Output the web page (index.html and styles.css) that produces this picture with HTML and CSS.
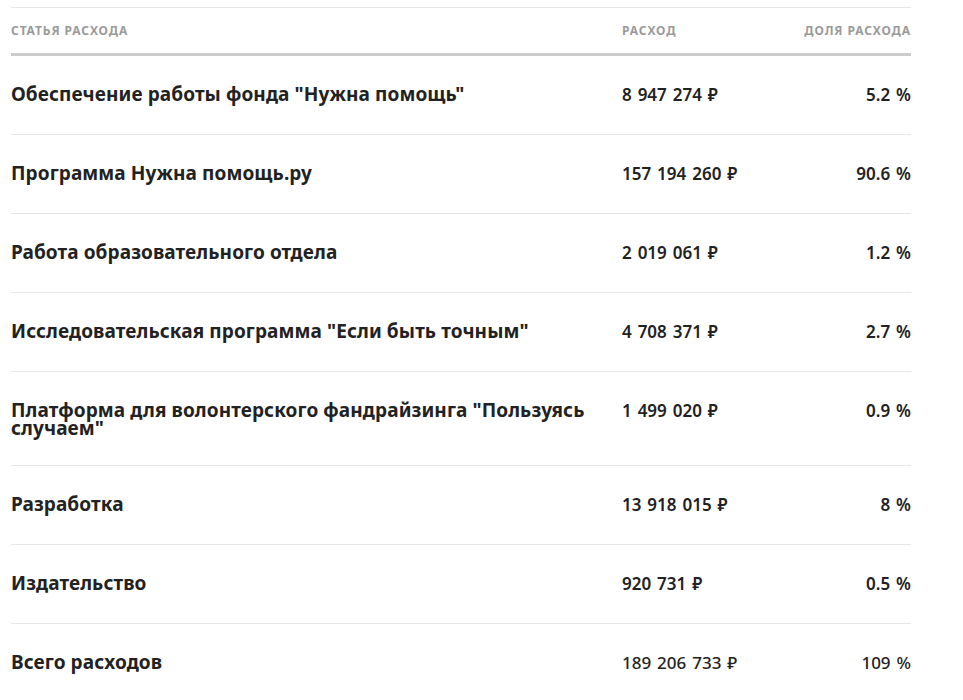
FILE: index.html
```html
<!DOCTYPE html>
<html lang="ru">
<head>
<meta charset="utf-8">
<link rel="stylesheet" href="styles.css">
</head>
<body>
<div class="page">
  <table class="costs">
    <thead>
      <tr>
        <th class="c-name">Статья расхода</th>
        <th class="c-sum">Расход</th>
        <th class="c-share">Доля расхода</th>
      </tr>
    </thead>
    <tbody>
      <tr>
        <td class="c-name">Обеспечение работы фонда "Нужна помощь"</td>
        <td class="c-sum">8 947 274 ₽</td>
        <td class="c-share">5.2 %</td>
      </tr>
      <tr>
        <td class="c-name">Программа Нужна помощь.ру</td>
        <td class="c-sum">157 194 260 ₽</td>
        <td class="c-share">90.6 %</td>
      </tr>
      <tr>
        <td class="c-name">Работа образовательного отдела</td>
        <td class="c-sum">2 019 061 ₽</td>
        <td class="c-share">1.2 %</td>
      </tr>
      <tr>
        <td class="c-name">Исследовательская программа "Если быть точным"</td>
        <td class="c-sum">4 708 371 ₽</td>
        <td class="c-share">2.7 %</td>
      </tr>
      <tr>
        <td class="c-name">Платформа для волонтерского фандрайзинга "Пользуясь случаем"</td>
        <td class="c-sum">1 499 020 ₽</td>
        <td class="c-share">0.9 %</td>
      </tr>
      <tr>
        <td class="c-name">Разработка</td>
        <td class="c-sum">13 918 015 ₽</td>
        <td class="c-share">8 %</td>
      </tr>
      <tr>
        <td class="c-name">Издательство</td>
        <td class="c-sum">920 731 ₽</td>
        <td class="c-share">0.5 %</td>
      </tr>
      <tr class="total">
        <td class="c-name">Всего расходов</td>
        <td class="c-sum">189 206 733 ₽</td>
        <td class="c-share">109 %</td>
      </tr>
    </tbody>
  </table>
</div>
</body>
</html>
```
FILE: styles.css
```css
html, body {
  margin: 0;
  padding: 0;
  background: #ffffff;
}

.page {
  padding: 7px 0 0 11px;
  font-family: "Noto Sans", "Liberation Sans", sans-serif;
  color: #222222;
}

.costs {
  width: 900px;
  border-collapse: collapse;
  border-top: 1px solid #e6e6e6;
}

.costs th {
  font-size: 12px;
  font-weight: 700;
  text-transform: uppercase;
  letter-spacing: 0.9px;
  color: #9a9a9a;
  text-align: left;
  padding: 16px 0 15px;
  line-height: 14px;
  border-bottom: 3px solid #cccccc;
}

.costs th.c-share {
  text-align: right;
  letter-spacing: 0.9px;
}

.costs td {
  padding: 28px 0;
  vertical-align: top;
  border-bottom: 1px solid #e6e6e6;
}

.costs .c-name {
  width: 611px;
  padding-right: 30px;
  box-sizing: border-box;
}

.costs td.c-name {
  font-size: 19px;
  font-weight: 700;
  line-height: 18px;
  padding-top: 29px;
  letter-spacing: 0.1px;
}

.costs .c-sum {
  width: 180px;
}

.costs td.c-sum,
.costs td.c-share {
  font-size: 17px;
  font-weight: 600;
  line-height: 22px;
  word-spacing: 1.5px;
}

.costs .c-share {
  text-align: right;
}

.costs .total td.c-sum,
.costs .total td.c-share {
  font-weight: 500;
}
```
